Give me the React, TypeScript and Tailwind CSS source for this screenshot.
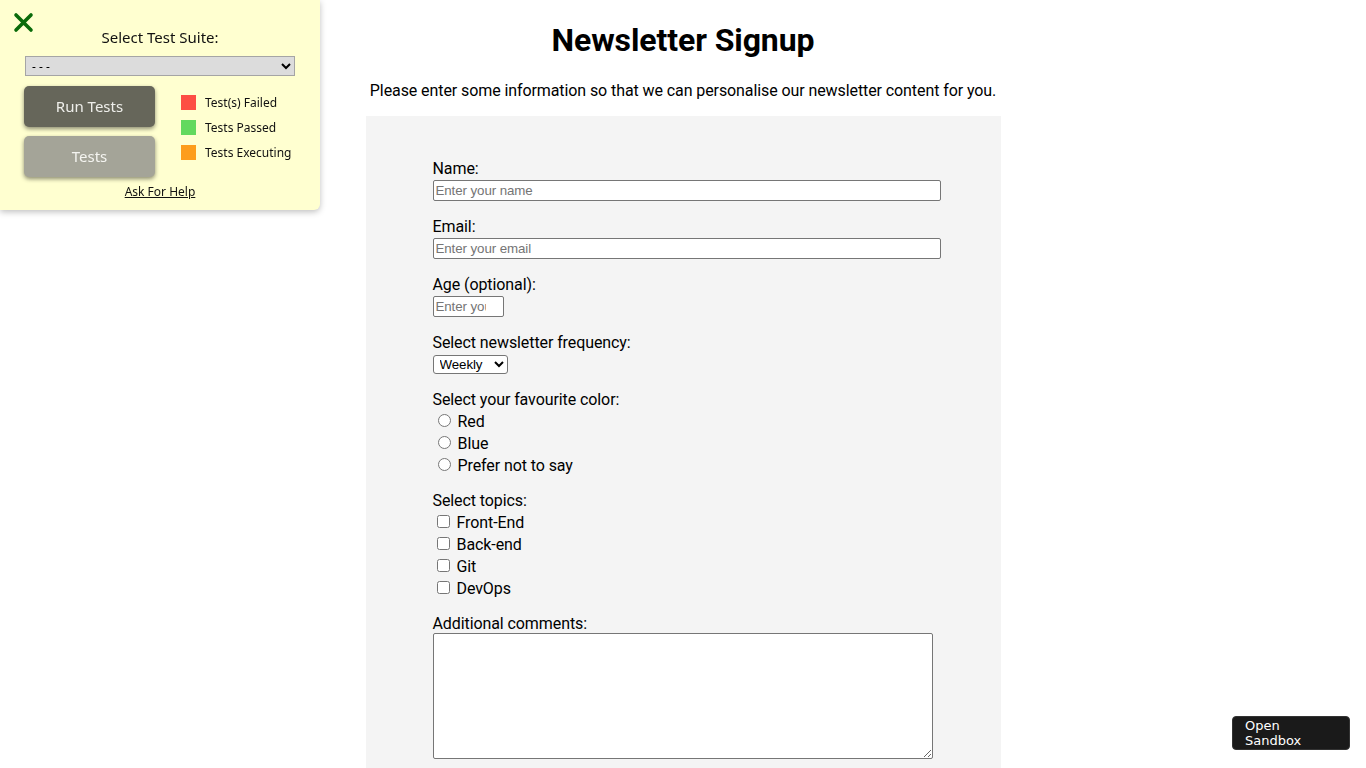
import React from "react";

const inputCls =
  "block border border-[#767676] rounded-[2px] bg-white px-[2px] text-[13.33px] text-black placeholder:text-[#757575] [font-family:'Liberation_Sans',Arial,sans-serif] outline-none";

function Group({ label, children, mb = "mb-[16px]" }: { label: string; children: React.ReactNode; mb?: string }) {
  return (
    <div className={mb}>
      <label className="block h-[19px] leading-[19px] text-[16px]">{label}</label>
      {children}
    </div>
  );
}

export default function App() {
  return (
    <div className="min-h-screen bg-white text-black tracking-[-0.09px] [font-family:Roboto,'Liberation_Sans',sans-serif]">
      <h1 className="text-center text-[32px] font-bold leading-[37px] pt-[22px] pb-[22px]">Newsletter Signup</h1>
      <p className="text-center text-[16px] leading-[19px] mb-[16px]">
        Please enter some information so that we can personalise our newsletter content for you.
      </p>
      <div className="mx-auto w-[635px] bg-[#f4f4f4] pl-[67px] pt-[43px] pb-[40px]">
        <Group label="Name:">
          <input className={`${inputCls} mt-[2px] w-[508px] h-[21px]`} placeholder="Enter your name" />
        </Group>
        <Group label="Email:">
          <input className={`${inputCls} mt-[2px] w-[508px] h-[21px]`} placeholder="Enter your email" />
        </Group>
        <Group label="Age (optional):">
          <input type="number" className={`${inputCls} mt-[2px] w-[71px] h-[21px]`} placeholder="Enter your age" />
        </Group>
        <Group label="Select newsletter frequency:" mb="mb-[16px]">
          <select className="mt-[3px] block w-[75px] h-[19px] border border-[#767676] rounded-[3px] bg-white pl-[2px] text-[13.33px] [font-family:'Liberation_Sans',Arial,sans-serif]" defaultValue="Weekly">
            <option>Weekly</option>
            <option>Monthly</option>
          </select>
        </Group>
        <div className="mb-[15px]">
          <label className="block h-[19px] leading-[19px] text-[16px]">Select your favourite color:</label>
          <div className="mt-[1px]">
            {["Red", "Blue", "Prefer not to say"].map((c) => (
              <div key={c} className="flex items-center h-[22px]">
                <input type="radio" name="color" className="ml-[5px] mr-[7px] mt-[-1px] w-[13px] h-[13px]" />
                <span className="text-[16px] leading-[19px]">{c}</span>
              </div>
            ))}
          </div>
        </div>
        <div className="mb-[15px]">
          <label className="block h-[19px] leading-[19px] text-[16px]">Select topics:</label>
          <div className="mt-[1px]">
            {["Front-End", "Back-end", "Git", "DevOps"].map((c) => (
              <div key={c} className="flex items-center h-[22px]">
                <input type="checkbox" className="ml-[4px] mr-[7px] mt-[-1px] w-[13px] h-[13px]" />
                <span className="text-[16px] leading-[19px]">{c}</span>
              </div>
            ))}
          </div>
        </div>
        <div>
          <label className="block h-[19px] leading-[19px] text-[16px]">Additional comments:</label>
          <textarea className="block w-[500px] h-[126px] border border-[#767676] rounded-[2px] bg-white text-[13.33px] [font-family:'Liberation_Mono',monospace]" />
        </div>
      </div>

      {/* Test panel overlay */}
      <div className="fixed top-0 left-0 w-[320px] h-[210px] bg-[#ffffd0] rounded-br-[6px] shadow-[0_2px_6px_rgba(0,0,0,0.25)] tracking-normal [font-family:'Noto_Sans','Open_Sans',sans-serif]">
        <svg className="absolute left-[13px] top-[12px]" width="21" height="21" viewBox="0 0 21 21">
          <path d="M3 3 L18 18 M18 3 L3 18" stroke="#0a6b0a" strokeWidth="3.6" strokeLinecap="round" />
        </svg>
        <div className="pt-[27px] text-center text-[15px] leading-[20px] text-[#111]">Select Test Suite:</div>
        <div className="px-[25px] mt-[9px]">
          <select className="block w-[270px] h-[20px] bg-[#dcdcdc] border border-[#a5a5a5] text-[12px] pl-[2px] text-black" defaultValue="---">
            <option value="---">- - -</option>
          </select>
        </div>
        <div className="flex mt-[10px] pl-[24px]">
          <div className="flex flex-col gap-[9px]">
            <button className="w-[131px] h-[41px] rounded-[5px] bg-[#66665a] text-[#eeeeea] text-[15px] shadow-[0_2px_4px_rgba(0,0,0,0.45)]">
              Run Tests
            </button>
            <button className="w-[131px] h-[41px] rounded-[5px] bg-[#a4a498] text-[#f4f4f0] text-[15px] shadow-[0_2px_4px_rgba(0,0,0,0.45)]">
              Tests
            </button>
          </div>
          <div className="ml-[26px] pt-[4px] flex flex-col">
            {[
              ["#fd4e44", "Test(s) Failed"],
              ["#63d95e", "Tests Passed"],
              ["#fd9d1c", "Tests Executing"],
            ].map(([col, t]) => (
              <div key={t} className="flex items-center h-[25px]">
                <span className="w-[15px] h-[15px]" style={{ backgroundColor: col }} />
                <span className="ml-[9px] text-[12px] text-[#111]">{t}</span>
              </div>
            ))}
          </div>
        </div>
        <div className="text-center mt-[7px] text-[12px] leading-[16px] underline text-[#111]">Ask For Help</div>
      </div>

      {/* Open Sandbox */}
      <div className="fixed right-[16px] bottom-[18px] w-[118px] h-[34px] bg-[#1a1a1a] rounded-[4px] border border-[#333] pl-[12px] pt-[1px] text-[13px] leading-[15px] tracking-normal text-white [font-family:'DejaVu_Sans',sans-serif]">
        Open
        <br />
        Sandbox
      </div>
    </div>
  );
}
